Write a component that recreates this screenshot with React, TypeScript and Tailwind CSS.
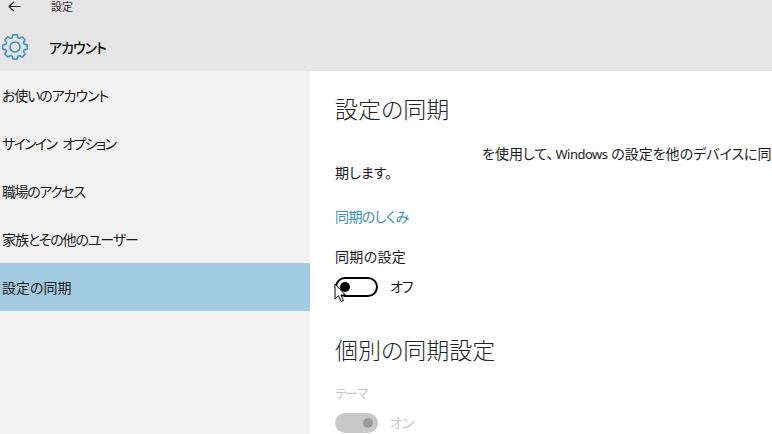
const FONT = "font-['Noto_Sans','Noto_Sans_CJK_JP',sans-serif] [font-feature-settings:'palt']";

const navItems = [
    { label: 'お使いのアカウント', tracking: 'tracking-[-1.1px]' },
    { label: 'サインイン オプション', tracking: 'tracking-[-1.7px] [word-spacing:4px]' },
    { label: '職場のアクセス', tracking: 'tracking-[-1.4px]' },
    { label: '家族とその他のユーザー', tracking: 'tracking-[-1.1px]' },
    { label: '設定の同期', tracking: 'tracking-normal' },
];

// 8 tooth outline, like the Windows 10 settings gear
function gearPath() {
    const points: string[] = [];
    for (let i = 0; i < 8; i++) {
        const mid = (i / 8) * Math.PI * 2;
        const offsets: [number, number][] = [
            [-0.3, 9.6],
            [-0.17, 12.4],
            [0.17, 12.4],
            [0.3, 9.6],
        ];
        for (const [da, r] of offsets) {
            const x = 13 + r * Math.cos(mid + da);
            const y = 13 + r * Math.sin(mid + da);
            points.push(`${x.toFixed(2)} ${y.toFixed(2)}`);
        }
    }
    return `M${points.join(' L')} Z`;
}

function Gear() {
    return (
        <svg width="26" height="26" viewBox="0 0 26 26" fill="none" stroke="#4b97c4" strokeWidth="1.7" strokeLinejoin="round">
            <path d={gearPath()} />
            <circle cx="13" cy="13" r="5" />
        </svg>
    );
}

function Cursor() {
    return (
        <svg className="absolute left-[-1px] top-[7px]" width="13" height="21" viewBox="0 0 13 21">
            <path d="M1 1 L1 16 L4.5 12.8 L7 18.6 L9.4 17.6 L6.9 12 L11.4 12 Z" fill="#fff" stroke="#000" strokeWidth="1" />
        </svg>
    );
}

export default function App() {
    return (
        <div className={`w-[772px] h-[434px] overflow-hidden bg-white flex flex-col text-[14px] text-[#1a1a1a] ${FONT}`}>
            <header className="h-[71px] shrink-0 bg-[#e6e6e6]">
                <div className="h-[13px] flex items-center pl-[8px] gap-[30px]">
                    <svg width="13" height="11" viewBox="0 0 13 11" fill="none" stroke="#222" strokeWidth="1.1">
                        <path d="M12.5 5.5 H1 M5.8 .8 L1 5.5 L5.8 10.2" />
                    </svg>
                    <span className="text-[11px] leading-[13px] text-[#333]">設定</span>
                </div>
                <div className="flex items-center h-[44px] pl-[2px] mt-[12px] gap-[21px]">
                    <Gear />
                    <span className="text-[14px] font-medium text-[#111] tracking-[-1px]">アカウント</span>
                </div>
            </header>
            <div className="flex flex-1 min-h-0">
                <nav className="w-[310px] shrink-0 bg-[#f2f2f2]">
                    {navItems.map((item, i) => (
                        <div key={item.label} className={`h-[48px] flex items-center pl-[2px] ${item.tracking} ${i === 4 ? 'bg-[#a2cbe2]' : ''}`}>
                            {item.label}
                        </div>
                    ))}
                </nav>
                <main className="flex-1 pl-[25px] min-w-0">
                    <h1 className="mt-[23px] text-[23px] leading-[30px] text-[#222] font-light">設定の同期</h1>
                    <p className="mt-[20px] w-[437px] text-[14px] leading-[19px]">
                        <span className="inline-block w-[147px] h-[1px]" />
                        を使用して、<span className="ml-[2px] text-[13px] leading-none tracking-[-0.5px]">Windows</span> の設定を他のデバイスに同期します。
                    </p>
                    <a className="block mt-[25px] text-[#3a8fb5] leading-[20px] tracking-[-0.6px]">同期のしくみ</a>
                    <div className="mt-[20px] leading-[20px] tracking-[0.3px]">同期の設定</div>
                    <div className="mt-[9px] flex items-center gap-[12px] relative">
                        <div className="w-[43px] h-[20px] rounded-full border-2 border-black flex items-center pl-[3px]">
                            <div className="w-[10px] h-[10px] rounded-full bg-black" />
                        </div>
                        <span className="text-[14px] tracking-[-1px]">オフ</span>
                        <Cursor />
                    </div>
                    <h2 className="mt-[38px] text-[23px] leading-[30px] text-[#222] font-light">個別の同期設定</h2>
                    <div className="mt-[18px] text-[13px] leading-[20px] text-[#c8c8c8] tracking-[-1.5px]">テーマ</div>
                    <div className="mt-[9px] flex items-center gap-[12px]">
                        <div className="w-[43px] h-[20px] rounded-full bg-[#c8c8c8] flex items-center justify-end pr-[5px]">
                            <div className="w-[10px] h-[10px] rounded-full bg-[#9b9b9b]" />
                        </div>
                        <span className="text-[14px] text-[#c8c8c8] tracking-[-1px]">オン</span>
                    </div>
                </main>
            </div>
        </div>
    );
}
